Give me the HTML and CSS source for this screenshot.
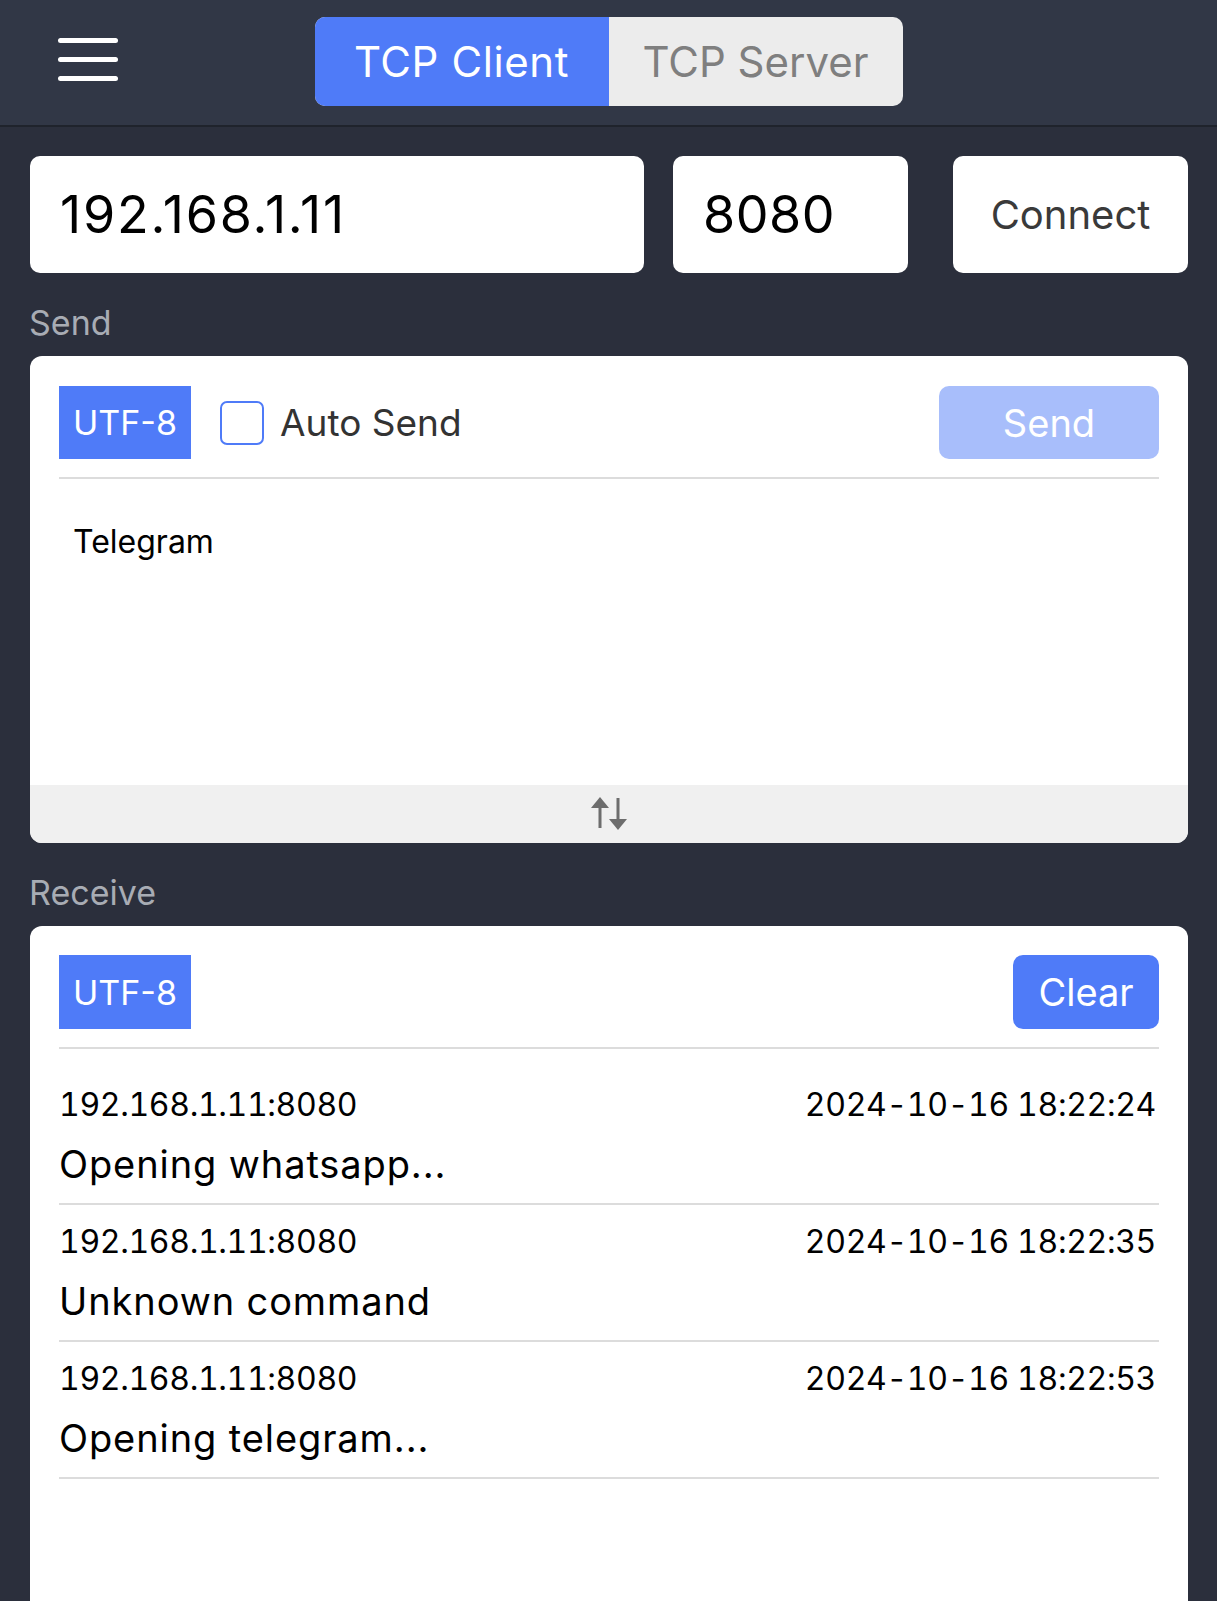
FILE: index.html
```html
<!DOCTYPE html>
<html lang="en">
<head>
<meta charset="utf-8">
<title>TCP Client</title>
<link rel="stylesheet" href="styles.css">
</head>
<body>
<div class="app">
  <header class="topbar">
    <div class="menu" aria-label="Menu">
      <span class="menu-line"></span>
      <span class="menu-line"></span>
      <span class="menu-line"></span>
    </div>
    <div class="segmented">
      <div class="seg seg-active">TCP Client</div>
      <div class="seg">TCP Server</div>
    </div>
    <div class="spacer"></div>
  </header>

  <div class="conn">
    <div class="field field-ip">192.168.1.11</div>
    <div class="field field-port">8080</div>
    <div class="field field-btn">Connect</div>
  </div>

  <div class="section-label">Send</div>
  <section class="card">
    <div class="card-body">
      <div class="card-head">
        <div class="badge">UTF-8</div>
        <div class="checkbox"></div>
        <div class="check-label">Auto Send</div>
        <div class="btn btn-light">Send</div>
      </div>
      <div class="textarea">Telegram</div>
    </div>
    <div class="card-foot">
      <svg class="swap-icon" width="40" height="36" viewBox="0 0 40 36" aria-hidden="true">
        <rect x="8.5" y="11" width="3" height="21" fill="#6d6d6d"/>
        <polygon points="1,12 10,1 19,12" fill="#6d6d6d"/>
        <rect x="26.5" y="2" width="3" height="22" fill="#6d6d6d"/>
        <polygon points="19,23 28,34 37,23" fill="#6d6d6d"/>
      </svg>
    </div>
  </section>

  <div class="section-label">Receive</div>
  <section class="card card-receive">
    <div class="card-body">
      <div class="card-head card-head-rx">
        <div class="badge">UTF-8</div>
        <div class="btn btn-primary">Clear</div>
      </div>
      <ul class="log">
        <li class="entry">
          <div class="entry-meta"><span class="addr">192.168.1.11:8080</span><span class="time">2024-10-16 18:22:24</span></div>
          <div class="entry-msg">Opening whatsapp...</div>
        </li>
        <li class="entry">
          <div class="entry-meta"><span class="addr">192.168.1.11:8080</span><span class="time">2024-10-16 18:22:35</span></div>
          <div class="entry-msg">Unknown command</div>
        </li>
        <li class="entry">
          <div class="entry-meta"><span class="addr">192.168.1.11:8080</span><span class="time">2024-10-16 18:22:53</span></div>
          <div class="entry-msg">Opening telegram...</div>
        </li>
      </ul>
    </div>
  </section>
</div>
</body>
</html>
```

FILE: styles.css
```css
* { box-sizing: border-box; }

html, body {
  margin: 0;
  padding: 0;
}

body {
  background: #2b2f3c;
  font-family: Inter, "Noto Sans", "Liberation Sans", sans-serif;
  color: #000;
}

.app {
  height: 100vh;
  overflow: hidden;
  display: flex;
  flex-direction: column;
}

.topbar {
  flex: none;
  height: 127px;
  background: #313746;
  border-bottom: 2px solid #1f232c;
  display: grid;
  grid-template-columns: 1fr auto 1fr;
  align-items: start;
}

.menu {
  margin: 38px 0 0 58px;
  width: 60px;
  display: flex;
  flex-direction: column;
  gap: 14px;
}

.menu-line {
  display: block;
  height: 5px;
  border-radius: 3px;
  background: #ffffff;
}

.segmented {
  margin-top: 17px;
  display: flex;
  height: 89px;
  border-radius: 10px;
  overflow: hidden;
  background: #ececec;
}

.seg {
  width: 294px;
  display: flex;
  align-items: center;
  justify-content: center;
  font-size: 42px;
  color: #7f7f7f;
}

.seg-active {
  background: #4f7bf8;
  color: #ffffff;
  letter-spacing: 0.6px;
}

.conn {
  flex: none;
  display: flex;
  gap: 29px;
  margin: 29px 29px 0 30px;
  height: 117px;
}

.field {
  background: #ffffff;
  border-radius: 10px;
  display: flex;
  align-items: center;
  font-size: 52px;
  color: #000;
}

.field-ip {
  flex: 1;
  padding-left: 30px;
  letter-spacing: 1.8px;
}

.field-port {
  width: 235px;
  padding-left: 30px;
  letter-spacing: 0.5px;
}

.field-btn {
  width: 235px;
  margin-left: 16px;
  justify-content: center;
  font-size: 40px;
  color: #3a3a3a;
}

.section-label {
  flex: none;
  margin: 30px 0 13px 29px;
  font-size: 34px;
  line-height: 40px;
  color: #a8acb4;
}

.card {
  flex: none;
  margin: 0 29px 0 30px;
  background: #ffffff;
  border-radius: 12px;
  overflow: hidden;
}

.card-body {
  padding: 0 29px;
}

.card-head {
  display: flex;
  align-items: center;
  padding: 30px 0 18px;
  border-bottom: 2px solid #dcdcdc;
}

.badge {
  width: 132px;
  height: 73px;
  background: #4f7bf8;
  color: #ffffff;
  font-size: 34px;
  display: flex;
  align-items: center;
  justify-content: center;
}

.checkbox {
  width: 44px;
  height: 44px;
  margin-left: 29px;
  border: 2.5px solid #4f7bf8;
  border-radius: 7px;
}

.check-label {
  margin-left: 16px;
  font-size: 37px;
  color: #333333;
}

.btn {
  margin-left: auto;
  height: 73px;
  border-radius: 10px;
  display: flex;
  align-items: center;
  justify-content: center;
  color: #ffffff;
  font-size: 38px;
}

.btn-light {
  width: 220px;
  background: #a8befb;
}

.btn-primary {
  width: 146px;
  background: #4f7bf8;
}

.textarea {
  height: 306px;
  padding: 43px 14px 0;
  font-size: 32px;
  line-height: 40px;
  color: #000;
}

.card-foot {
  height: 58px;
  background: #f0f0f0;
  display: flex;
  align-items: center;
  justify-content: center;
}

.swap-icon {
  display: block;
  margin-left: 1px;
}

.card-receive {
  min-height: 800px;
  border-radius: 12px 12px 0 0;
}

.card-head-rx {
  padding-top: 29px;
}

.card-head-rx .badge {
  height: 74px;
}

.card-head-rx .btn {
  height: 74px;
}

.log {
  list-style: none;
  margin: 0;
  padding: 19px 0 0;
}

.entry {
  padding: 17px 0 16px;
  border-bottom: 2px solid #dcdcdc;
}

.entry-meta {
  display: flex;
  justify-content: space-between;
  padding-right: 3px;
  font-size: 32px;
  line-height: 40px;
  letter-spacing: -0.35px;
  color: #000;
  font-variant-numeric: tabular-nums;
}

.entry-msg {
  margin-top: 16px;
  font-size: 38px;
  line-height: 46px;
  letter-spacing: 0.9px;
  color: #000;
}
```
